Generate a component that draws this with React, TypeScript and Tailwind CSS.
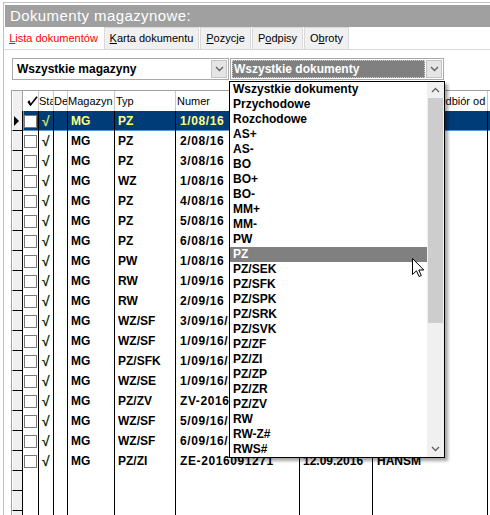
import clsx from 'clsx';

const docTypes = [
  'Wszystkie dokumenty',
  'Przychodowe',
  'Rozchodowe',
  'AS+',
  'AS-',
  'BO',
  'BO+',
  'BO-',
  'MM+',
  'MM-',
  'PW',
  'PZ',
  'PZ/SEK',
  'PZ/SFK',
  'PZ/SPK',
  'PZ/SRK',
  'PZ/SVK',
  'PZ/ZF',
  'PZ/ZI',
  'PZ/ZP',
  'PZ/ZR',
  'PZ/ZV',
  'RW',
  'RW-Z#',
  'RWS#',
];

type Doc = { typ: string; numer: string; data?: string; osoba?: string };

const docs: Doc[] = [
  { typ: 'PZ', numer: '1/08/16' },
  { typ: 'PZ', numer: '2/08/16' },
  { typ: 'PZ', numer: '3/08/16' },
  { typ: 'WZ', numer: '1/08/16' },
  { typ: 'PZ', numer: '4/08/16' },
  { typ: 'PZ', numer: '5/08/16' },
  { typ: 'PZ', numer: '6/08/16' },
  { typ: 'PW', numer: '1/08/16' },
  { typ: 'RW', numer: '1/09/16' },
  { typ: 'RW', numer: '2/09/16' },
  { typ: 'WZ/SF', numer: '3/09/16/SF' },
  { typ: 'WZ/SF', numer: '1/09/16/SF' },
  { typ: 'PZ/SFK', numer: '1/09/16/SFK' },
  { typ: 'WZ/SE', numer: '1/09/16/SE' },
  { typ: 'PZ/ZV', numer: 'ZV-2016-0001' },
  { typ: 'WZ/SF', numer: '5/09/16/SF' },
  { typ: 'WZ/SF', numer: '6/09/16/SF' },
  { typ: 'PZ/ZI', numer: 'ZE-2016091271', data: '12.09.2016', osoba: 'HANSM' },
];

const cell = 'shrink-0 overflow-hidden whitespace-nowrap border-r border-black';
const head = 'shrink-0 overflow-hidden whitespace-nowrap border-r border-[#c8c8c8] leading-[20px]';

function Chevron({ up = false }: { up?: boolean }) {
  return (
    <svg width="9" height="6" viewBox="0 0 9 6" fill="none">
      <polyline
        points={up ? '1,5 4.5,1.5 8,5' : '1,1 4.5,4.5 8,1'}
        stroke="#606060"
        strokeWidth="1.3"
      />
    </svg>
  );
}

function Combo({ label, focused = false }: { label: string; focused?: boolean }) {
  return (
    <div
      className={clsx(
        'flex h-[22px] items-center border border-[#a9a9a9] bg-white',
        focused ? 'ml-[1px] w-[214px]' : 'ml-[8px] w-[217px]',
      )}
    >
      {focused ? (
        <div className="ml-[1px] flex h-[18px] flex-1 items-center border border-dotted border-[#cfcfcf] bg-[#808080] pl-[1px] text-[12px] font-bold text-white">
          {label}
        </div>
      ) : (
        <div className="flex-1 pl-[4px] text-[12px] font-bold text-black">{label}</div>
      )}
      <div className="mx-[1px] flex h-[18px] w-[16px] items-center justify-center border border-[#c4c4c4] bg-[#e5e5e5]">
        <Chevron />
      </div>
    </div>
  );
}

function Tabs() {
  const tab = 'ml-[1px] flex h-[22px] items-center justify-center border border-b-0 border-[#d9d9d9] bg-[#f0f0f0] text-[11px] text-black';
  return (
    <div className="flex h-[24px] items-end border-b border-[#d9d9d9]">
      <div className="ml-[1px] flex h-[22px] w-[97px] items-center justify-center bg-white text-[11px] text-[#ff0000]">
        <u>L</u>ista dokumentów
      </div>
      <div className={clsx(tab, 'ml-[2px] w-[95px]')}>
        <u>K</u>arta dokumentu
      </div>
      <div className={clsx(tab, 'w-[51px]')}>
        <u>P</u>ozycje
      </div>
      <div className={clsx(tab, 'w-[51px]')}>
        P<u>o</u>dpisy
      </div>
      <div className={clsx(tab, 'w-[45px]')}>
        O<u>b</u>roty
      </div>
    </div>
  );
}

function Row({ d, selected }: { d?: Doc; selected?: boolean }) {
  const txt = selected ? 'text-[#ffff80]' : 'text-black';
  return (
    <div
      className={clsx(
        'flex h-[20px] shrink-0 text-[12px] font-bold leading-[20px]',
        selected && 'bg-[#003c78] shadow-[inset_0_-1px_0_#5b9bd5]',
        txt,
      )}
    >
      <div className="flex w-[11px] shrink-0 items-center border-b border-l border-r border-b-black border-l-white border-r-black bg-[#f0f0f0]">
        {selected && (
          <div className="ml-[1px] h-0 w-0 border-y-[5px] border-l-[5px] border-y-transparent border-l-black" />
        )}
      </div>
      <div className={clsx(cell, 'flex w-[16px] items-center pl-[1px]', selected && 'shadow-[inset_1px_0_0_#5b9bd5]')}>
        {d && <div className="h-[13px] w-[13px] border border-[#7a7a7a] bg-white" />}
      </div>
      <div className={clsx(cell, 'w-[15px] pl-[3px] text-[14px]', selected ? 'text-[#d6e46a]' : 'text-[#0c2a00]')}>
        {d && '√'}
      </div>
      <div className={clsx(cell, 'w-[14px]')} />
      <div className={clsx(cell, 'w-[47px] pl-[3px]')}>{d && 'MG'}</div>
      <div className={clsx(cell, 'w-[61px] pl-[3px]')}>{d?.typ}</div>
      <div className={clsx(cell, 'w-[124px] pl-[4px] tracking-[0.6px]')}>{d?.numer}</div>
      <div className={clsx(cell, 'w-[73px] pl-[3px]')}>{d?.data}</div>
      <div className={clsx(cell, 'w-[115px] pl-[4px]')}>{d?.osoba}</div>
      <div className="w-[40px] shrink-0" />
    </div>
  );
}

function Grid() {
  return (
    <div className="ml-[7px] mt-[10px] flex flex-col border-l border-t border-[#a0a0a0]">
      <div className="flex h-[20px] shrink-0 bg-white text-[11px] text-black">
        <div className="w-[11px] shrink-0 border-l border-r border-l-white border-r-[#a0a0a0] bg-[#f0f0f0]" />
        <div className={clsx(head, 'flex w-[16px] items-center pl-[4px]')}>
          <svg width="11" height="10" viewBox="0 0 11 10" fill="none">
            <path d="M1 5.5 L3.5 9 L10 0.8" stroke="#000" strokeWidth="1.6" />
            <path d="M2.2 4.6 L3.2 8.6" stroke="#000" strokeWidth="1.4" />
          </svg>
        </div>
        <div className={clsx(head, 'w-[15px]')}>Sta</div>
        <div className={clsx(head, 'w-[14px]')}>De</div>
        <div className={clsx(head, 'w-[47px]')}>Magazyn</div>
        <div className={clsx(head, 'w-[61px] pl-[1px]')}>Typ</div>
        <div className={clsx(head, 'w-[124px] pl-[1px]')}>Numer</div>
        <div className={clsx(head, 'w-[73px] pl-[1px]')}>Data</div>
        <div className={clsx(head, 'w-[115px] pl-[64px]')}>Odbiór od</div>
        <div className="w-[40px] shrink-0" />
      </div>
      {docs.map((d, i) => (
        <Row key={i} d={d} selected={i === 0} />
      ))}
      <Row />
      <Row />
      <Row />
    </div>
  );
}

function DropList() {
  return (
    <div className="absolute left-[229px] top-[81px] flex h-[377px] w-[216px] border border-black bg-white shadow-[3px_3px_3px_rgba(0,0,0,0.35)]">
      <div className="flex flex-1 flex-col">
        {docTypes.map((t) => (
          <div
            key={t}
            className={clsx(
              'h-[15px] shrink-0 pl-[3px] text-[12px] font-bold leading-[15px]',
              t === 'PZ' ? 'bg-[#808080] text-white' : 'text-black',
            )}
          >
            {t}
          </div>
        ))}
      </div>
      <div className="flex w-[17px] flex-col bg-[#f0f0f0]">
        <div className="flex h-[16px] shrink-0 items-center justify-center">
          <Chevron up />
        </div>
        <div className="mx-[1px] h-[225px] shrink-0 bg-[#cdcdcd]" />
        <div className="flex-1" />
        <div className="flex h-[16px] shrink-0 items-center justify-center">
          <Chevron />
        </div>
      </div>
    </div>
  );
}

function Cursor() {
  return (
    <svg className="absolute left-[412px] top-[258px]" width="13" height="20" viewBox="0 0 13 20">
      <path
        d="M0.5 0.5 L0.5 16.5 L4.5 12.8 L7 18.5 L9.3 17.5 L6.8 12 L11.8 12 Z"
        fill="#fff"
        stroke="#000"
        strokeWidth="1"
        strokeLinejoin="miter"
      />
    </svg>
  );
}

export default function App() {
  return (
    <div className="relative h-[515px] w-[490px] overflow-hidden bg-white pl-[3px] pt-[2px] font-['Liberation_Sans',Arial,sans-serif]">
      <div className="flex h-full flex-col border-l border-t border-[#c0c0c0]">
        <div className="ml-[1px] mt-[2px] flex h-[22px] shrink-0 items-center bg-[#a0a0a0] pl-[5px] text-[15px] tracking-[0.4px] text-white">
          Dokumenty magazynowe:
        </div>
        <Tabs />
        <div className="mt-[8px] flex shrink-0">
          <Combo label="Wszystkie magazyny" />
          <Combo label="Wszystkie dokumenty" focused />
        </div>
        <Grid />
      </div>
      <DropList />
      <Cursor />
    </div>
  );
}
